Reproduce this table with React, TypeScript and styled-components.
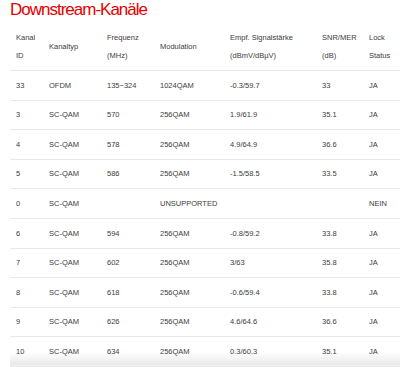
import styled, { createGlobalStyle } from "styled-components";

const GlobalStyle = createGlobalStyle`
  html, body {
    margin: 0;
    padding: 0;
    background: #ffffff;
  }
  body {
    font-family: "Liberation Sans", Arial, sans-serif;
  }
`;

const Page = styled.div`
  width: 400px;
  height: 367px;
  overflow: hidden;
  padding-left: 10px;
  box-sizing: border-box;
`;

const Title = styled.h2`
  margin: 0;
  font-family: "Liberation Sans", Arial, sans-serif;
  font-weight: normal;
  font-size: 17px;
  line-height: 20px;
  letter-spacing: -1px;
  color: #e60000;
`;

const Table = styled.table`
  width: 390px;
  margin-top: 4px;
  border-collapse: collapse;
  table-layout: fixed;
  font-size: 7.5px;
  color: #3c3c3c;
`;

const HeadCell = styled.th`
  text-align: left;
  font-weight: normal;
  vertical-align: middle;
  line-height: 18px;
  padding: 5px 0 5px 6px;
  border-bottom: 1px solid #e8e8e8;
`;

const Row = styled.tr<{ $fade?: boolean }>`
  background: ${(p) =>
    p.$fade
      ? "linear-gradient(to bottom, #ffffff 50%, #e9e9e9 92%, #ffffff 100%)"
      : "transparent"};
`;

const Cell = styled.td`
  line-height: 18px;
  padding: 5.6px 0 5px 6px;
  border-bottom: 1px solid #e8e8e8;
  white-space: nowrap;
`;

const columns = [33, 58, 53, 70, 92, 47, 37];

const headers: string[][] = [
  ["Kanal", "ID"],
  ["Kanaltyp"],
  ["Frequenz", "(MHz)"],
  ["Modulation"],
  ["Empf. Signalstärke", "(dBmV/dBµV)"],
  ["SNR/MER", "(dB)"],
  ["Lock", "Status"],
];

const rows: string[][] = [
  ["33", "OFDM", "135~324", "1024QAM", "-0.3/59.7", "33", "JA"],
  ["3", "SC-QAM", "570", "256QAM", "1.9/61.9", "35.1", "JA"],
  ["4", "SC-QAM", "578", "256QAM", "4.9/64.9", "36.6", "JA"],
  ["5", "SC-QAM", "586", "256QAM", "-1.5/58.5", "33.5", "JA"],
  ["0", "SC-QAM", "", "UNSUPPORTED", "", "", "NEIN"],
  ["6", "SC-QAM", "594", "256QAM", "-0.8/59.2", "33.8", "JA"],
  ["7", "SC-QAM", "602", "256QAM", "3/63", "35.8", "JA"],
  ["8", "SC-QAM", "618", "256QAM", "-0.6/59.4", "33.8", "JA"],
  ["9", "SC-QAM", "626", "256QAM", "4.6/64.6", "36.6", "JA"],
  ["10", "SC-QAM", "634", "256QAM", "0.3/60.3", "35.1", "JA"],
];

export default function App() {
  return (
    <Page>
      <GlobalStyle />
      <Title>Downstream-Kanäle</Title>
      <Table>
        <colgroup>
          {columns.map((w, i) => (
            <col key={i} style={{ width: w }} />
          ))}
        </colgroup>
        <thead>
          <tr>
            {headers.map((lines, i) => (
              <HeadCell key={i}>
                {lines.map((l, j) => (
                  <div key={j}>{l}</div>
                ))}
              </HeadCell>
            ))}
          </tr>
        </thead>
        <tbody>
          {rows.map((r, i) => (
            <Row key={i} $fade={i === rows.length - 1}>
              {r.map((c, j) => (
                <Cell key={j}>{c}</Cell>
              ))}
            </Row>
          ))}
        </tbody>
      </Table>
    </Page>
  );
}
